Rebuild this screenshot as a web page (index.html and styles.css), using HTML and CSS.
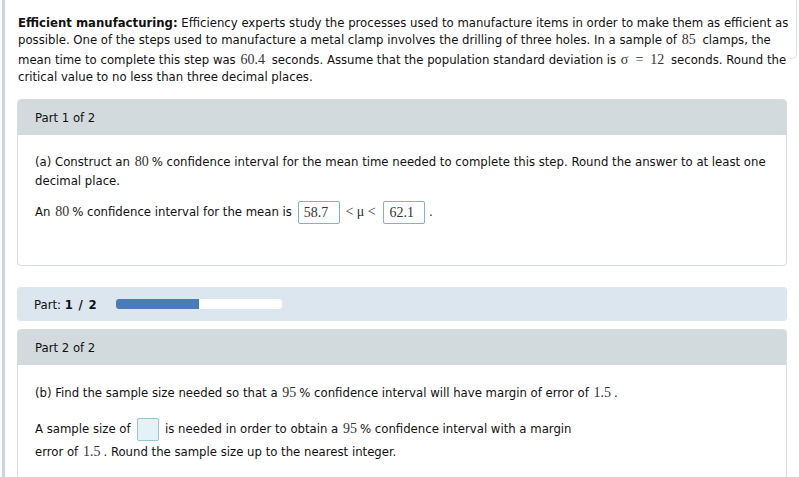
FILE: index.html
```html
<!DOCTYPE html>
<html>
<head>
<meta charset="utf-8">
<link rel="stylesheet" href="styles.css">
</head>
<body>
<div class="page">
  <div class="edge"></div>
  <p class="intro"><b>Efficient manufacturing:</b> Efficiency experts study the processes used to manufacture items in order to make them as efficient as possible. One of the steps used to manufacture a metal clamp involves the drilling of three holes. In a sample of <span class="m">85</span> clamps, the mean time to complete this step was <span class="m">60.4</span> seconds. Assume that the population standard deviation is <span class="m tall">σ&nbsp; = &nbsp;12</span> seconds. Round the critical value to no less than three decimal places.</p>

  <section class="card">
    <div class="card-head">Part 1 of 2</div>
    <div class="card-body">
      <p class="q">(a) Construct an <span class="m pc">80</span>% confidence interval for the mean time needed to complete this step. Round the answer to at least one decimal place.</p>
      <p class="ans">An <span class="m pc">80</span>% confidence interval for the mean is <span class="box">58.7</span> <span class="m rel">&lt; μ &lt;</span> <span class="box">62.1</span> .</p>
    </div>
  </section>

  <div class="progress">
    <span class="plabel">Part: <b>1 / 2</b></span>
    <div class="bar"><div class="fill" style="width:50%"></div></div>
  </div>

  <section class="card last">
    <div class="card-head">Part 2 of 2</div>
    <div class="card-body">
      <p class="q">(b) Find the sample size needed so that a <span class="m pc">95</span>% confidence interval will have margin of error of <span class="m">1.5</span>.</p>
      <p class="ans2">A sample size of <span class="box empty"></span> is needed in order to obtain a <span class="m pc">95</span>% confidence interval with a margin<br>error of <span class="m">1.5</span>. Round the sample size up to the nearest integer.</p>
    </div>
  </section>
</div>
</body>
</html>
```

FILE: styles.css
```css
html, body {
  margin: 0;
  padding: 0;
  background: #fff;
}
body {
  font-family: "DejaVu Sans Condensed", "DejaVu Sans", sans-serif;
  font-size: 13px;
  color: #111;
  overflow: hidden;
}
.page {
  position: relative;
  margin-left: 2px;
  border-left: 3px solid #cdd6dc;
  height: 477px;
  padding: 14px 12px 0 12px;
  box-sizing: border-box;
  display: flex;
  flex-direction: column;
}
.edge {
  position: absolute;
  right: 2px;
  top: -6px;
  width: 6px;
  height: 64px;
  border-right: 1px solid #dde2e5;
  border-bottom: 1px solid #dde2e5;
  border-bottom-right-radius: 5px;
}
p { margin: 0; }
.intro {
  padding-left: 1px;
  width: 772px;
  line-height: 17px;
}
.intro b { font-weight: bold; }
.m {
  font-family: "Liberation Serif", "Times New Roman", serif;
  font-size: 14px;
  color: #333;
  padding: 0 3px 0 1px;
}
.m.pc { padding-right: 3px; }
.tall {
  display: inline-block;
  padding-top: 3px;
}
.card {
  flex: none;
  margin-top: 14px;
  border: 1px solid #d6dde0;
  border-radius: 4px;
  overflow: hidden;
}
.card-head {
  background: #d3dadd;
  height: 35px;
  line-height: 35px;
  padding-left: 17px;
}
.card-body {
  padding: 17px 17px 0 17px;
  height: 130px;
  box-sizing: border-box;
}
.q {
  line-height: 19px;
}
.ans {
  margin-top: 9px;
  line-height: 25px;
}
.box {
  display: inline-block;
  min-width: 30px;
  height: 21px;
  line-height: 21px;
  padding: 0 5px;
  border: 1px solid #7fb3c6;
  border-radius: 2px;
  font-family: "Liberation Serif", "Times New Roman", serif;
  font-size: 14px;
  color: #333;
  vertical-align: middle;
  text-align: left;
  margin-left: 2px;
}
.box.empty {
  min-width: 0;
  width: 20px;
  padding: 0;
  margin: 0 2px 0 3px;
  background: #e4f2f7;
  border-color: #96c5d6;
}
.rel { padding: 0 2px; }
.progress {
  flex: none;
  margin-top: 21px;
  background: #dbe6ef;
  border-radius: 4px;
  height: 34px;
  display: flex;
  align-items: center;
  padding-left: 17px;
}
.plabel b { font-weight: bold; letter-spacing: 0.8px; }
.bar {
  margin-left: 19px;
  width: 166px;
  height: 10px;
  background: #fff;
  border-radius: 3px;
  overflow: hidden;
}
.fill {
  height: 100%;
  background: #4a7db7;
}
.card.last {
  flex: 1;
  margin-top: 8px;
  border-bottom: none;
  border-radius: 4px 4px 0 0;
}
.card.last .card-body {
  height: auto;
  padding-top: 18px;
}
.ans2 {
  margin-top: 16px;
  line-height: 21px;
}
```
